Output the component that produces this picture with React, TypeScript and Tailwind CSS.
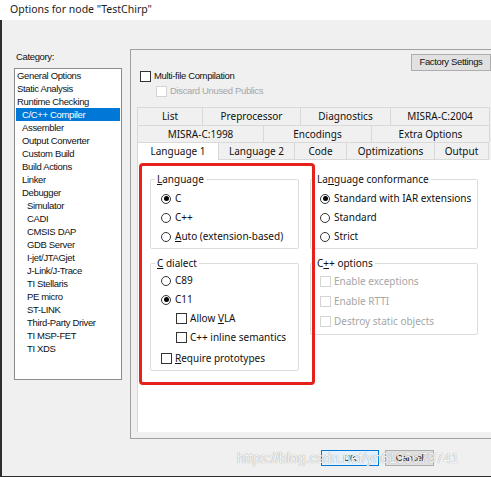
import type { ReactNode } from 'react'

const small = "font-['Liberation_Sans',Arial,sans-serif] text-[9.5px] tracking-[-0.35px]"
const ui = "font-['Noto_Sans',sans-serif] text-[10px]"

const categories: [string, number][] = [
  ['General Options', 0],
  ['Static Analysis', 0],
  ['Runtime Checking', 0],
  ['C/C++ Compiler', 1],
  ['Assembler', 1],
  ['Output Converter', 1],
  ['Custom Build', 1],
  ['Build Actions', 1],
  ['Linker', 1],
  ['Debugger', 1],
  ['Simulator', 2],
  ['CADI', 2],
  ['CMSIS DAP', 2],
  ['GDB Server', 2],
  ['I-jet/JTAGjet', 2],
  ['J-Link/J-Trace', 2],
  ['TI Stellaris', 2],
  ['PE micro', 2],
  ['ST-LINK', 2],
  ['Third-Party Driver', 2],
  ['TI MSP-FET', 2],
  ['TI XDS', 2],
]

const row1 = [['List', 65], ['Preprocessor', 98], ['Diagnostics', 90], ['MISRA-C:2004', 99]] as const
const row2 = [['MISRA-C:1998', 126], ['Encodings', 108], ['Extra Options', 118]] as const
const row3 = [['Language 1', 82], ['Language 2', 76], ['Code', 52], ['Optimizations', 88], ['Output', 54]] as const

function Radio({ checked, children, h = 'h-[19px]' }: { checked?: boolean; children: ReactNode; h?: string }) {
  return (
    <div className={`flex items-center gap-[4px] ${h}`}>
      <span className="w-[10px] h-[10px] rounded-full border border-[#333] bg-white flex items-center justify-center">
        {checked && <span className="w-[5px] h-[5px] rounded-full bg-black" />}
      </span>
      <span>{children}</span>
    </div>
  )
}

function Check({ disabled, children, h = 'h-[19px]' }: { disabled?: boolean; children: ReactNode; h?: string }) {
  return (
    <div className={`flex items-center gap-[3px] ${h} ${disabled ? 'text-[#a6a6a6]' : ''}`}>
      <span className={`w-[11px] h-[11px] border bg-white ${disabled ? 'border-[#d4d4d4]' : 'border-[#333]'}`} />
      <span>{children}</span>
    </div>
  )
}

function Group({ title, className, children }: { title: ReactNode; className?: string; children: ReactNode }) {
  return (
    <fieldset className={`border border-[#dcdcdc] rounded-[2px] ${className ?? ''}`}>
      <legend className="ml-[4px] px-[2px] leading-[13px]">{title}</legend>
      {children}
    </fieldset>
  )
}

function Tab({ label, w, className }: { label: string; w: number; className: string }) {
  return (
    <div className={`flex items-center justify-center shrink-0 ${className}`} style={{ width: w }}>
      {label}
    </div>
  )
}

export default function App() {
  return (
    <div className="relative w-[491px] h-[477px] overflow-hidden bg-[#f0f0f0] text-[#111]">
      <div className="h-[20px] bg-white pl-[10px] flex items-center font-['Noto_Sans',sans-serif] text-[10.5px] text-[#222]">
        Options for node "TestChirp"
      </div>

      <div className="flex h-[457px]">
        <div className="w-[4px] bg-[#2d2d2d]" />
        <div className="flex-1 flex flex-col">
          <div className="flex h-[419px]">
            {/* category list */}
            <div className={`w-[128px] pl-[12px] pt-[31px] ${small}`}>
              <div className="h-[12px] leading-[12px] pl-[2px]">Category:</div>
              <div className="mt-[5px] w-[108px] h-[312px] bg-white border border-[#8c8c8c]">
                {categories.map(([name, lvl], i) => (
                  <div
                    key={name}
                    className={`h-[13px] leading-[13px] ${
                      i === 3 ? 'bg-[#0078d7] text-white mx-[1px]' : ''
                    } ${lvl === 0 ? 'pl-[2px]' : lvl === 1 ? (i === 3 ? 'pl-[6px]' : 'pl-[7px]') : 'pl-[12px]'}`}
                  >
                    {name}
                  </div>
                ))}
              </div>
            </div>

            {/* options panel */}
            <div className="flex-1 mt-[29px] h-[390px] border-t border-l border-b border-[#a0a0a0] pl-[6px]">
              <div className={`h-[57px] flex ${small}`}>
                <div className="w-[274px] pl-[3px] pt-[20px]">
                  <Check h="h-[12px]">
                    <span className="text-[#111]">Multi-file Compilation</span>
                  </Check>
                  <div className="mt-[3px] pl-[16px]">
                    <Check disabled h="h-[12px]">Discard Unused Publics</Check>
                  </div>
                </div>
                <div className="mt-[4px] h-[17px] w-[80px] shrink-0 border border-[#adadad] bg-[#e1e1e1] flex items-center justify-center">
                  Factory Settings
                </div>
              </div>

              <div className={ui}>
                <div className="flex h-[18px] border-l border-[#d9d9d9]">
                  {row1.map(([l, w]) => (
                    <Tab key={l} label={l} w={w} className="border-t border-r border-[#d9d9d9]" />
                  ))}
                </div>
                <div className="flex h-[17px] border-l border-[#d9d9d9]">
                  {row2.map(([l, w]) => (
                    <Tab key={l} label={l} w={w} className="border-t border-r border-[#d9d9d9]" />
                  ))}
                </div>
                <div className="flex h-[18px]">
                  {row3.map(([l, w], i) => (
                    <Tab
                      key={l}
                      label={l}
                      w={w}
                      className={
                        i === 0
                          ? 'bg-white border-l border-t border-r border-[#d9d9d9]'
                          : 'border-t border-r border-b border-[#d9d9d9]'
                      }
                    />
                  ))}
                </div>

                <div className="relative h-[272px] bg-white border-l border-[#d9d9d9] pl-[12px] pt-[13px] flex">
                  <div className="w-[149px]">
                    <Group title={<><u>L</u>anguage</>}>
                      <div className="pl-[10px] pt-[3px] pb-[2px]">
                        <Radio checked>C</Radio>
                        <Radio>C++</Radio>
                        <Radio><u>A</u>uto (extension-based)</Radio>
                      </div>
                    </Group>
                    <Group title={<><u>C</u> dialect</>} className="mt-[8px]">
                      <div className="pl-[10px] pt-[1px]">
                        <Radio>C89</Radio>
                        <Radio checked>C11</Radio>
                        <div className="pl-[15px]">
                          <Check>Allow <u>V</u>LA</Check>
                          <Check>C++ inline semantics</Check>
                        </div>
                        <Check h="h-[23px]"><u>R</u>equire prototypes</Check>
                      </div>
                    </Group>
                  </div>

                  <div className="w-[168px] ml-[11px]">
                    <Group title={<>La<u>n</u>guage conformance</>}>
                      <div className="pl-[9px] pt-[3px] pb-[2px]">
                        <Radio checked>Standard with IAR extensions</Radio>
                        <Radio>Standard</Radio>
                        <Radio>Strict</Radio>
                      </div>
                    </Group>
                    <Group title={<>C<u>+</u>+ options</>} className="mt-[8px]">
                      <div className="pl-[9px] pt-[1px] pb-[3px]">
                        <Check disabled h="h-[20px]">Enable exceptions</Check>
                        <Check disabled h="h-[20px]">Enable RTTI</Check>
                        <Check disabled h="h-[20px]">Destroy static objects</Check>
                      </div>
                    </Group>
                  </div>

                  <div className="absolute left-[1px] top-[3px] w-[176px] h-[222px] border-[3px] border-[#e4221b] rounded-[4px]" />
                </div>
              </div>
            </div>
          </div>

          <div className={`mt-[11px] h-[16px] flex justify-end gap-[6px] pr-[57px] ${small}`}>
            <div className="w-[58px] border border-[#0078d7] bg-[#e5f1fb] flex items-center justify-center">OK</div>
            <div className="w-[49px] border border-[#adadad] bg-[#e1e1e1] flex items-center justify-center">Cancel</div>
          </div>
          <div className="mt-auto h-[1px] bg-[#2d2d2d]" />
        </div>
      </div>

      {/* blog watermark laid over the dialog buttons */}
      <div className="absolute left-[237px] top-[450px] font-['Liberation_Sans',Arial,sans-serif] text-[14px] leading-[16px] text-[#f7f7f7] [text-shadow:0_0_1px_rgba(0,0,0,0.45)] pointer-events-none">
        https://blog.csdn.net/yn6195679741
      </div>
    </div>
  )
}
